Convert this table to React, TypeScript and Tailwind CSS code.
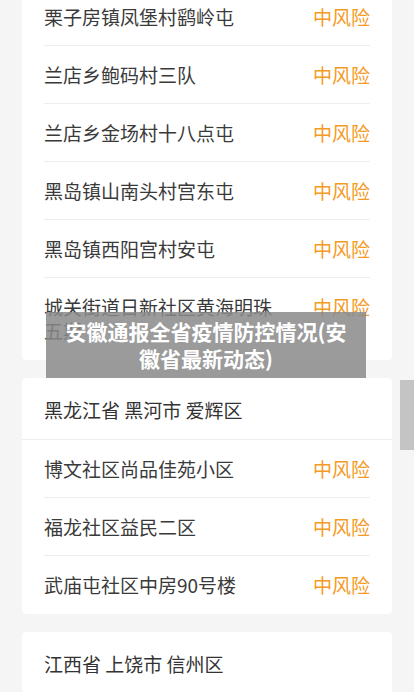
const groups = [
  {
    header: "",
    rows: [
      "栗子房镇凤堡村鹞岭屯",
      "兰店乡鲍码村三队",
      "兰店乡金场村十八点屯",
      "黑岛镇山南头村宫东屯",
      "黑岛镇西阳宫村安屯",
      "城关街道日新社区黄海明珠五期",
    ],
  },
  {
    header: "黑龙江省 黑河市 爱辉区",
    rows: ["博文社区尚品佳苑小区", "福龙社区益民二区", "武庙屯社区中房90号楼"],
  },
  {
    header: "江西省 上饶市 信州区",
    rows: [],
  },
];

const Row = ({ name, last }: { name: string; last: boolean }) => (
  <div
    className={
      "flex items-start justify-between pt-[17px] pb-[16px] " +
      (last ? "border-b border-transparent" : "border-b border-[#eeeeee]")
    }
  >
    <div className="w-[240px] text-[19px] leading-[24px] text-[#3a3a3a]">
      {name}
    </div>
    <div className="text-[19px] leading-[24px] text-[#f59a23]">中风险</div>
  </div>
);

export default function App() {
  return (
    <div
      className="relative h-[692px] overflow-hidden bg-[#f5f5f5]"
      style={{ fontFamily: '"Noto Sans CJK SC", "Noto Sans", sans-serif' }}
    >
      <div className="mt-[-12px] flex flex-col gap-[18px] px-[22px]">
        {groups.map((g, gi) => (
          <div key={gi} className="rounded-[4px] bg-white">
            {g.header && (
              <div
                className={
                  "px-[22px] pt-5 pb-[17px] text-[19px] leading-[24px] text-[#333333] " +
                  (g.rows.length ? "border-b border-[#eeeeee]" : "")
                }
              >
                {g.header}
              </div>
            )}
            {g.rows.length > 0 && (
              <div className="px-[22px]">
                {g.rows.map((r, ri) => (
                  <Row key={ri} name={r} last={ri === g.rows.length - 1} />
                ))}
              </div>
            )}
          </div>
        ))}
      </div>

      <div className="absolute left-[46px] top-[312px] w-[320px] bg-[#8a8a8a]/85 px-[18px] py-[6px] text-center text-[21px] font-bold leading-[27px] text-white">
        安徽通报全省疫情防控情况(安徽省最新动态)
      </div>

      <div className="absolute right-0 top-[380px] h-[70px] w-[14px] bg-[#c4c4c4]" />
    </div>
  );
}
